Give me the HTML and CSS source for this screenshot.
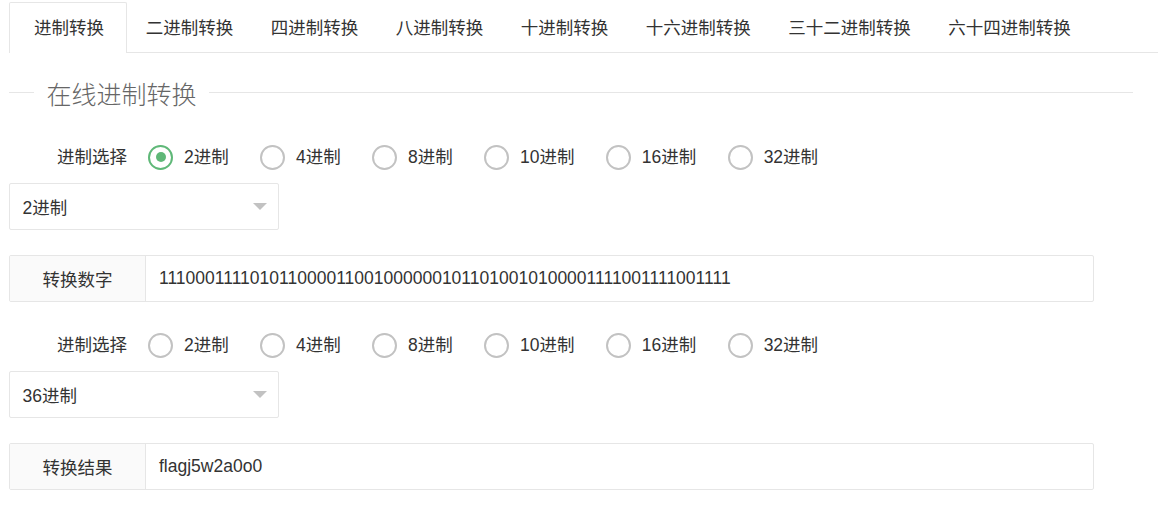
FILE: index.html
```html
<!DOCTYPE html>
<html lang="zh-CN">
<head>
<meta charset="utf-8">
<title>在线进制转换</title>
<link rel="stylesheet" href="styles.css">
</head>
<body>
<div class="page">
  <ul class="tabs">
    <li class="tab tab--active">进制转换</li>
    <li class="tab">二进制转换</li>
    <li class="tab">四进制转换</li>
    <li class="tab">八进制转换</li>
    <li class="tab">十进制转换</li>
    <li class="tab">十六进制转换</li>
    <li class="tab">三十二进制转换</li>
    <li class="tab">六十四进制转换</li>
  </ul>

  <div class="field-title">
    <span class="field-line field-line--short"></span>
    <span class="field-legend">在线进制转换</span>
    <span class="field-line"></span>
  </div>

  <div class="form-item form-item--first">
    <div class="form-label">进制选择</div>
    <div class="radios">
      <div class="radio radio--checked"><span class="radio-icon"></span><span class="radio-text">2进制</span></div>
      <div class="radio"><span class="radio-icon"></span><span class="radio-text">4进制</span></div>
      <div class="radio"><span class="radio-icon"></span><span class="radio-text">8进制</span></div>
      <div class="radio"><span class="radio-icon"></span><span class="radio-text">10进制</span></div>
      <div class="radio"><span class="radio-icon"></span><span class="radio-text">16进制</span></div>
      <div class="radio"><span class="radio-icon"></span><span class="radio-text">32进制</span></div>
    </div>
  </div>
  <div class="select"><span class="select-text">2进制</span><span class="select-arrow"></span></div>

  <div class="input-group">
    <div class="input-label">转换数字</div>
    <div class="input-text">1110001111010110000110010000001011010010100001111001111001111</div>
  </div>

  <div class="form-item">
    <div class="form-label">进制选择</div>
    <div class="radios">
      <div class="radio"><span class="radio-icon"></span><span class="radio-text">2进制</span></div>
      <div class="radio"><span class="radio-icon"></span><span class="radio-text">4进制</span></div>
      <div class="radio"><span class="radio-icon"></span><span class="radio-text">8进制</span></div>
      <div class="radio"><span class="radio-icon"></span><span class="radio-text">10进制</span></div>
      <div class="radio"><span class="radio-icon"></span><span class="radio-text">16进制</span></div>
      <div class="radio"><span class="radio-icon"></span><span class="radio-text">32进制</span></div>
    </div>
  </div>
  <div class="select"><span class="select-text">36进制</span><span class="select-arrow"></span></div>

  <div class="input-group">
    <div class="input-label">转换结果</div>
    <div class="input-text">flagj5w2a0o0</div>
  </div>
</div>
</body>
</html>
```

FILE: styles.css
```css
* { box-sizing: border-box; }

html, body {
  margin: 0;
  padding: 0;
  background: #fff;
}

body {
  font-family: "Liberation Sans", "Noto Sans CJK SC", sans-serif;
  font-size: 17.5px;
  color: #333;
}

.page {
  padding: 0 0 0 9px;
}

/* Tabs */
.tabs {
  display: flex;
  list-style: none;
  margin: 2px 0 0 0;
  padding: 0;
  border-bottom: 1px solid #e6e6e6;
}

.tab {
  line-height: 50px;
  height: 51px;
  padding: 0 17.75px;
  border: 1px solid transparent;
  border-bottom: 0;
  margin-bottom: -1px;
  white-space: nowrap;
  color: #333;
}

.tab--active {
  border-color: #e6e6e6;
  background: #fff;
  border-radius: 2px 2px 0 0;
  padding: 0 22px 0 24px;
}

/* Fieldset title */
.field-title {
  display: flex;
  height: 30px;
  margin: 27px 25px 0 0;
}

.field-line {
  flex: 1;
  height: 1px;
  margin-top: 12px;
  background: #e6e6e6;
}

.field-line--short {
  flex: 0 0 25px;
}

.field-legend {
  padding: 0 12.5px;
  font-size: 25px;
  line-height: 30px;
  font-weight: 300;
  color: #666;
}

/* Radio row */
.form-item {
  display: flex;
  align-items: center;
  height: 48px;
  margin-top: 19px;
}

.form-item--first {
  margin-top: 23px;
}

.form-label {
  width: 137px;
  padding-right: 19px;
  text-align: right;
  line-height: 25px;
}

.radios {
  display: flex;
  align-items: center;
  gap: 31.3px;
  margin-left: 2px;
}

.radio {
  display: flex;
  align-items: center;
}

.radio-icon {
  width: 25px;
  height: 25px;
  border: 2px solid #c2c2c2;
  border-radius: 50%;
  margin-right: 11px;
  display: flex;
  align-items: center;
  justify-content: center;
}

.radio--checked .radio-icon {
  border-color: #5fb878;
}

.radio--checked .radio-icon::after {
  content: "";
  width: 10px;
  height: 10px;
  border-radius: 50%;
  background: #5fb878;
}

.radio-text {
  line-height: 25px;
}

/* Select */
.select {
  width: 270px;
  height: 47px;
  margin-top: 2px;
  border: 1px solid #e6e6e6;
  border-radius: 2px;
  display: flex;
  align-items: center;
  justify-content: space-between;
  padding: 0 11px 0 12.5px;
  background: #fff;
}

.select-arrow {
  width: 0;
  height: 0;
  border-top: 7px solid #c2c2c2;
  border-left: 7.5px solid transparent;
  border-right: 7.5px solid transparent;
}

/* Input group */
.input-group {
  display: flex;
  height: 47px;
  margin: 25px 64px 0 0;
  border: 1px solid #e6e6e6;
  border-radius: 2px;
  overflow: hidden;
}

.input-label {
  width: 136px;
  flex: 0 0 136px;
  background: #fafafa;
  border-right: 1px solid #e6e6e6;
  display: flex;
  align-items: center;
  justify-content: center;
}

.input-text {
  flex: 1;
  display: flex;
  align-items: center;
  padding-left: 13px;
  white-space: nowrap;
  color: #333;
}
```
